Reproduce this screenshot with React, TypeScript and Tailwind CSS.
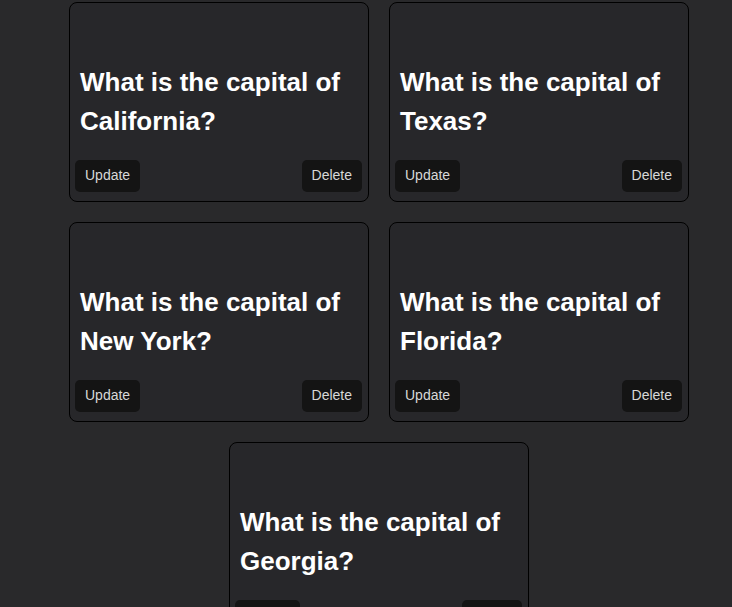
const questions = [
  "What is the capital of California?",
  "What is the capital of Texas?",
  "What is the capital of New York?",
  "What is the capital of Florida?",
  "What is the capital of Georgia?",
];

const Card = ({ question }: { question: string }) => {
  return (
    <div className="w-[300px] h-[200px] flex flex-col border border-black rounded-[8px] bg-[#27272a]">
      <div className="h-[60px]" />
      <h2 className="px-[10px] text-[26px] leading-[39px] font-bold text-white">{question}</h2>
      <div className="mt-auto flex justify-between pl-[5px] pr-[6px] pb-[9px]">
        <button className="h-[32px] px-[10px] pb-[1px] rounded-[5px] bg-[#141414] text-[14px] text-[#d8d8d8]">
          Update
        </button>
        <button className="h-[32px] px-[10px] pb-[1px] rounded-[5px] bg-[#141414] text-[14px] text-[#d8d8d8]">
          Delete
        </button>
      </div>
    </div>
  );
};

const App = () => {
  return (
    <div
      className="min-h-screen bg-[#29292b] pt-[2px] pl-[26px]"
      style={{ fontFamily: '"Liberation Sans", Arial, sans-serif' }}
    >
      <div className="flex flex-wrap justify-center gap-x-[20px] gap-y-[20px] w-[706px]">
        {questions.map((q) => (
          <Card key={q} question={q} />
        ))}
      </div>
    </div>
  );
};

export default App;
